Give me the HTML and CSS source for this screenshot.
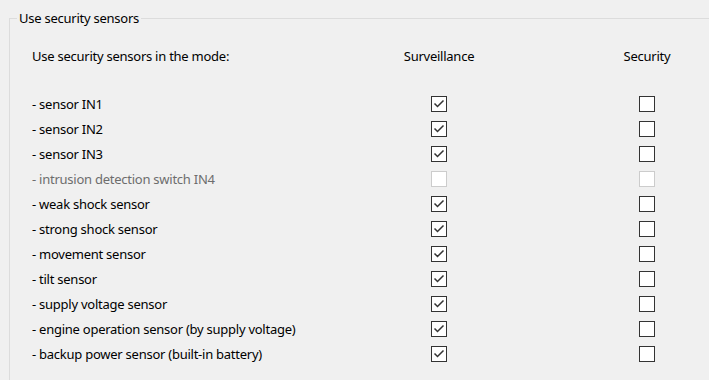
FILE: index.html
```html
<!DOCTYPE html>
<html lang="en">
<head>
    <meta charset="UTF-8">
    <title>Use security sensors</title>
    <link rel="stylesheet" href="styles.css">
</head>
<body>
    <fieldset class="group">
        <legend>Use security sensors</legend>
        <div class="grid">
            <div class="head">Use security sensors in the mode:</div>
            <div class="head center">Surveillance</div>
            <div class="head center">Security</div>

            <div class="label">- sensor IN1</div>
            <div class="cell"><span class="box"><svg viewBox="0 0 14 14"><path d="M2.5 6.5 L5.5 9.5 L11.5 3.5"/></svg></span></div>
            <div class="cell"><span class="box"></span></div>

            <div class="label">- sensor IN2</div>
            <div class="cell"><span class="box"><svg viewBox="0 0 14 14"><path d="M2.5 6.5 L5.5 9.5 L11.5 3.5"/></svg></span></div>
            <div class="cell"><span class="box"></span></div>

            <div class="label">- sensor IN3</div>
            <div class="cell"><span class="box"><svg viewBox="0 0 14 14"><path d="M2.5 6.5 L5.5 9.5 L11.5 3.5"/></svg></span></div>
            <div class="cell"><span class="box"></span></div>

            <div class="label disabled">- intrusion detection switch IN4</div>
            <div class="cell"><span class="box off"></span></div>
            <div class="cell"><span class="box off"></span></div>

            <div class="label">- weak shock sensor</div>
            <div class="cell"><span class="box"><svg viewBox="0 0 14 14"><path d="M2.5 6.5 L5.5 9.5 L11.5 3.5"/></svg></span></div>
            <div class="cell"><span class="box"></span></div>

            <div class="label">- strong shock sensor</div>
            <div class="cell"><span class="box"><svg viewBox="0 0 14 14"><path d="M2.5 6.5 L5.5 9.5 L11.5 3.5"/></svg></span></div>
            <div class="cell"><span class="box"></span></div>

            <div class="label">- movement sensor</div>
            <div class="cell"><span class="box"><svg viewBox="0 0 14 14"><path d="M2.5 6.5 L5.5 9.5 L11.5 3.5"/></svg></span></div>
            <div class="cell"><span class="box"></span></div>

            <div class="label">- tilt sensor</div>
            <div class="cell"><span class="box"><svg viewBox="0 0 14 14"><path d="M2.5 6.5 L5.5 9.5 L11.5 3.5"/></svg></span></div>
            <div class="cell"><span class="box"></span></div>

            <div class="label">- supply voltage sensor</div>
            <div class="cell"><span class="box"><svg viewBox="0 0 14 14"><path d="M2.5 6.5 L5.5 9.5 L11.5 3.5"/></svg></span></div>
            <div class="cell"><span class="box"></span></div>

            <div class="label">- engine operation sensor (by supply voltage)</div>
            <div class="cell"><span class="box"><svg viewBox="0 0 14 14"><path d="M2.5 6.5 L5.5 9.5 L11.5 3.5"/></svg></span></div>
            <div class="cell"><span class="box"></span></div>

            <div class="label">- backup power sensor (built-in battery)</div>
            <div class="cell"><span class="box"><svg viewBox="0 0 14 14"><path d="M2.5 6.5 L5.5 9.5 L11.5 3.5"/></svg></span></div>
            <div class="cell"><span class="box"></span></div>
        </div>
    </fieldset>
</body>
</html>
```

FILE: styles.css
```css
body {
    margin: 0;
    background-color: #f0f0f0;
    font-family: "Noto Sans", "Open Sans", sans-serif;
    font-size: 13px;
    letter-spacing: -0.25px;
    color: #000;
    overflow: hidden;
}
.group {
    margin: 9px -20px 0 9px;
    padding: 0;
    border: 1px solid #dcdcdc;
    height: 400px;
}
.group legend {
    padding: 0 2px;
    margin-left: 7px;
    line-height: 18px;
}
.grid {
    display: grid;
    grid-template-columns: 246px 94px 94px;
    grid-template-rows: 47px;
    grid-auto-rows: 25px;
    column-gap: 114px;
    align-items: center;
    margin: 17px 0 0 22px;
    white-space: nowrap;
}
.head {
    align-self: start;
    line-height: 25px;
}
.center {
    text-align: center;
}
.label.disabled {
    color: #6d6d6d;
}
.cell {
    display: flex;
    justify-content: center;
}
.box {
    width: 14px;
    height: 14px;
    border: 1px solid #333;
    background-color: #fff;
}
.box.off {
    border-color: #cccccc;
}
.box svg {
    display: block;
    width: 14px;
    height: 14px;
}
.box path {
    fill: none;
    stroke: #333;
    stroke-width: 1.5;
}
```
